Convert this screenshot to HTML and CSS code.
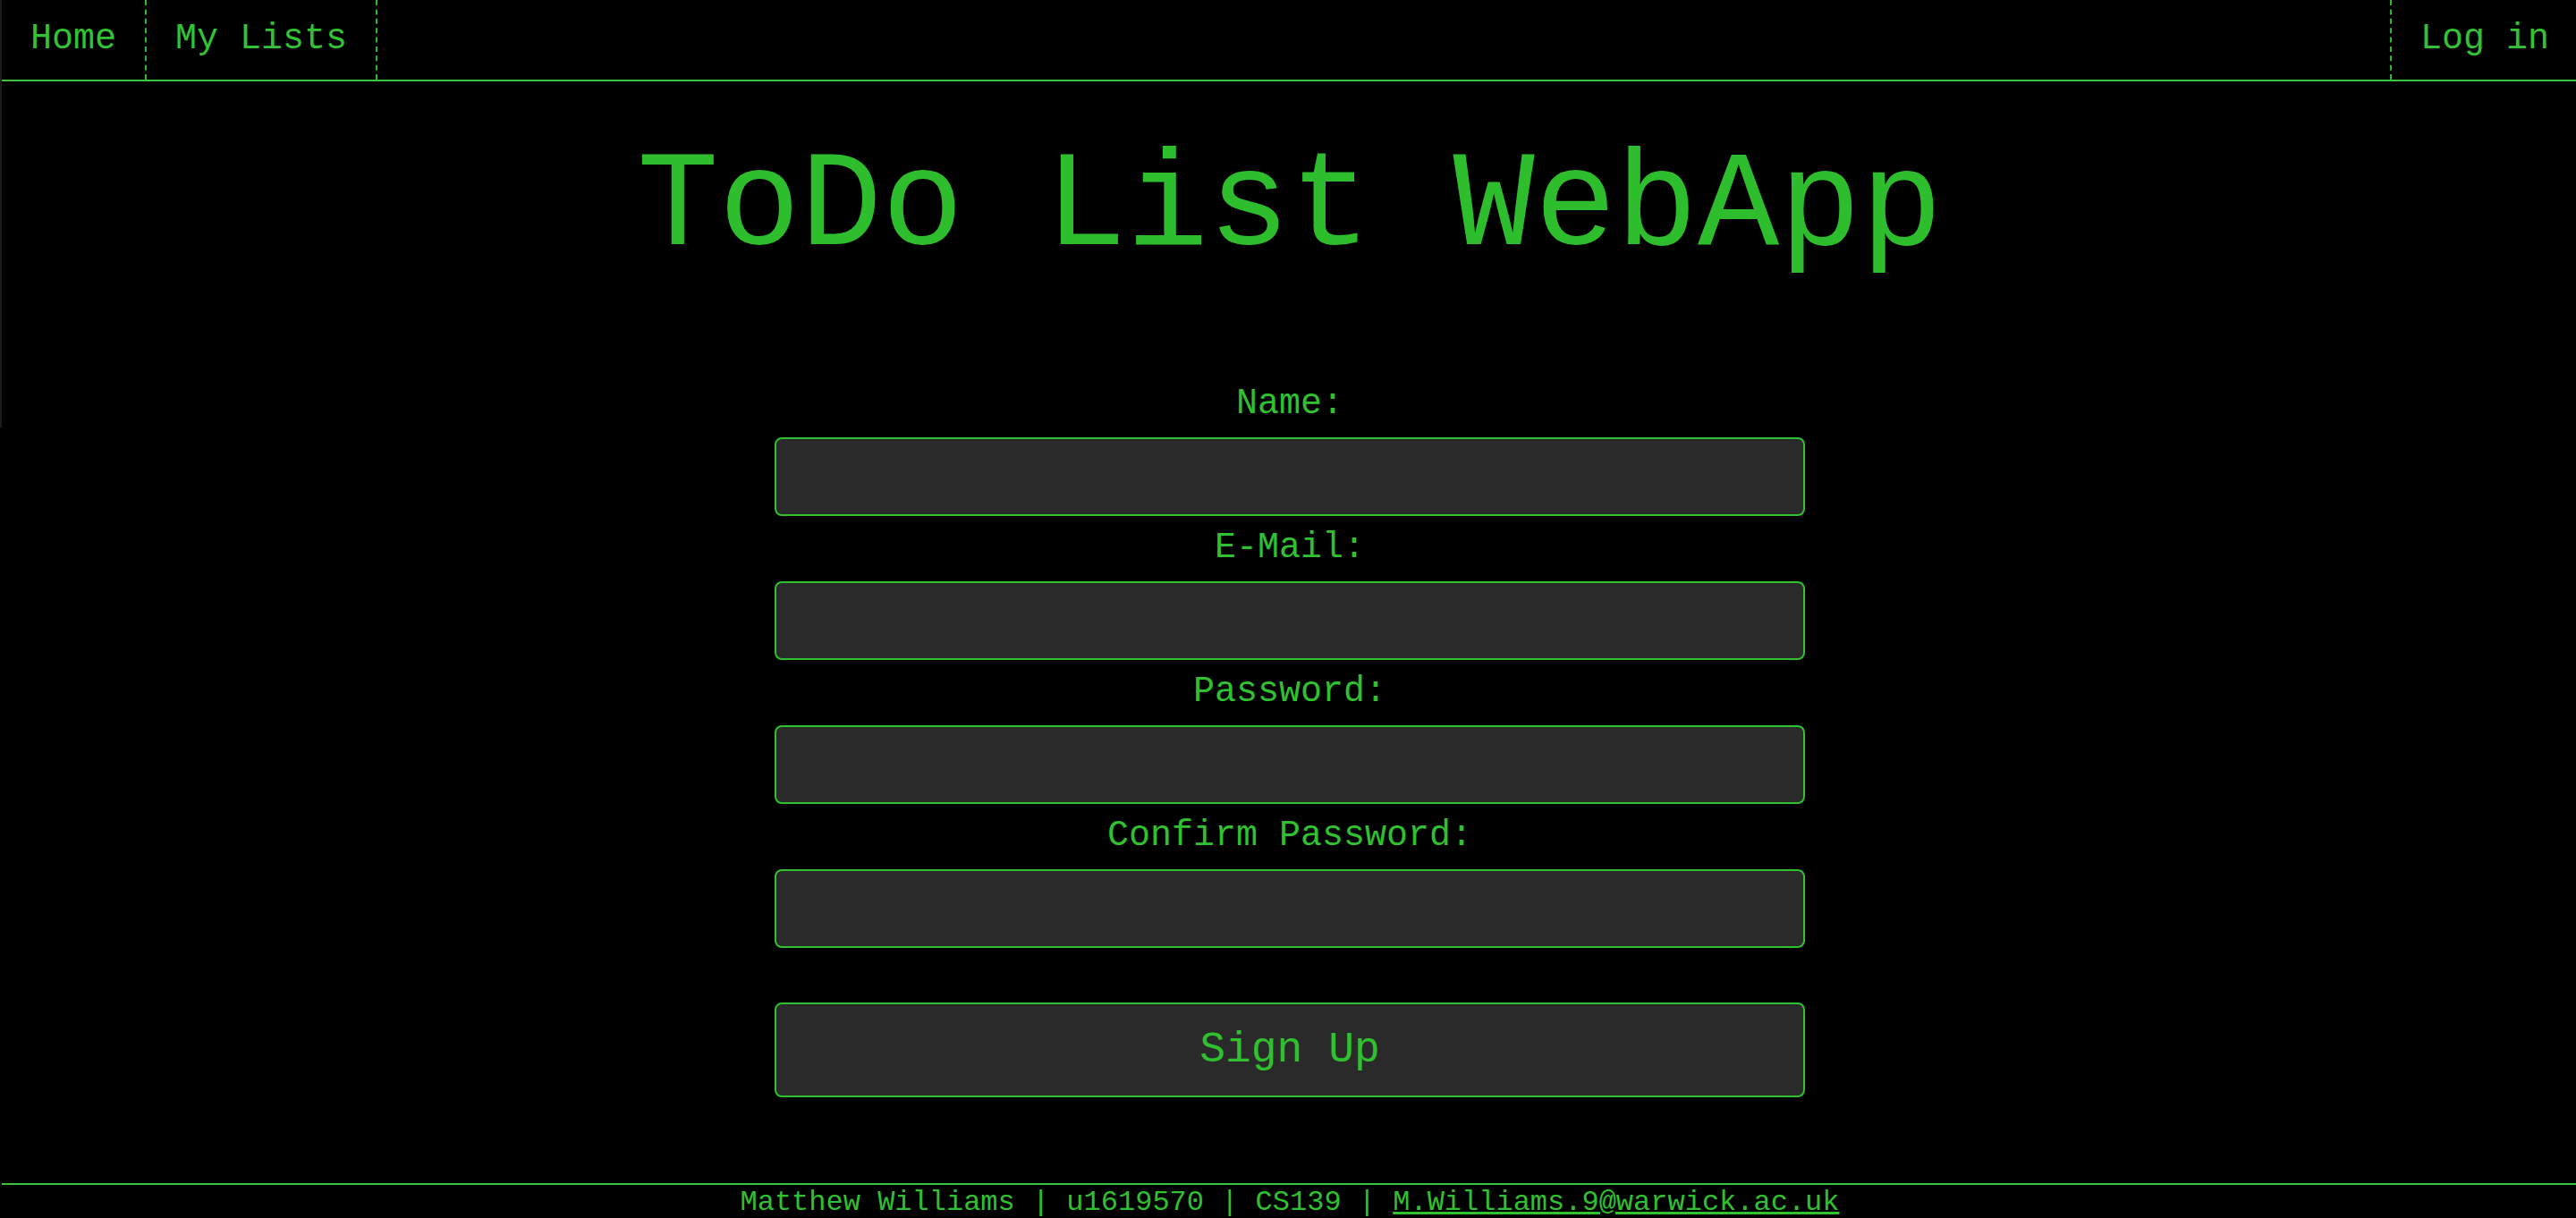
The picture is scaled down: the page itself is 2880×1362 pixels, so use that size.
FILE: index.html
```html
<!DOCTYPE html>
<html lang="en">
<head>
<meta charset="utf-8">
<title>ToDo List WebApp - Sign Up</title>
<link rel="stylesheet" href="styles.css">
</head>
<body>
<div class="edge"></div>
<div class="page">
  <nav class="nav">
    <a class="nav-item" href="#">Home</a>
    <a class="nav-item" href="#">My Lists</a>
    <a class="nav-item nav-right" href="#">Log in</a>
  </nav>
  <main class="main">
    <h1 class="title">ToDo List WebApp</h1>
    <form class="form">
      <label class="label" for="name">Name:</label>
      <input class="field" id="name" type="text">
      <label class="label" for="email">E-Mail:</label>
      <input class="field" id="email" type="email">
      <label class="label" for="pw">Password:</label>
      <input class="field" id="pw" type="password">
      <label class="label" for="pw2">Confirm Password:</label>
      <input class="field" id="pw2" type="password">
      <button class="submit" type="button">Sign Up</button>
    </form>
  </main>
  <footer class="footer">Matthew Williams | u1619570 | CS139 | <a class="mail" href="#">M.Williams.9@warwick.ac.uk</a></footer>
</div>
</body>
</html>
```
FILE: styles.css
```css
html {
  overflow: hidden;
  background: #000;
}
body {
  margin: 0;
  background: #000;
  color: #30c030;
  font-family: "Courier New", "Liberation Mono", monospace;
}
.edge {
  position: absolute;
  left: 0;
  top: 0;
  width: 2px;
  height: 478px;
  background: #1c1c1c;
}
.page {
  margin-left: 2px;
  width: 2880px;
  min-height: 1362px;
  display: flex;
  flex-direction: column;
}
.nav {
  display: flex;
  height: 89px;
  border-bottom: 2px solid #3cc43c;
}
.nav-item {
  display: flex;
  align-items: center;
  padding: 0 32px 2px;
  font-size: 40px;
  color: #33c233;
  text-decoration: none;
  border-right: 2px dashed #2fb82f;
}
.nav-right {
  margin-left: auto;
  border-right: none;
  border-left: 2px dashed #2fb82f;
}
.main {
  flex: 1;
  display: flex;
  flex-direction: column;
  align-items: center;
}
.title {
  margin: 56px 0 0;
  font-size: 152px;
  font-weight: normal;
  line-height: 172px;
  color: #2dbd2d;
}
.form {
  width: 40%;
  display: flex;
  flex-direction: column;
  align-items: stretch;
  margin-top: 97px;
}
.label {
  text-align: center;
  font-size: 40px;
  line-height: 45px;
  padding: 13px 0 15px;
  color: #30c030;
}
.field {
  box-sizing: border-box;
  height: 88px;
  margin: 0;
  background: #2a2a2a;
  border: 2px solid #30c030;
  border-radius: 8px;
  color: #30c030;
  font-family: inherit;
  font-size: 40px;
  padding: 0 16px;
  outline: none;
}
.submit {
  box-sizing: border-box;
  height: 106px;
  margin-top: 61px;
  background: #2a2a2a;
  border: 2px solid #30c030;
  border-radius: 8px;
  color: #30c030;
  font-family: inherit;
  font-size: 48px;
  cursor: pointer;
}
.footer {
  border-top: 2px solid #3cc43c;
  text-align: center;
  font-size: 32px;
  line-height: 34px;
  padding-top: 3px;
  color: #30c030;
}
.mail {
  color: #30c030;
}
```
